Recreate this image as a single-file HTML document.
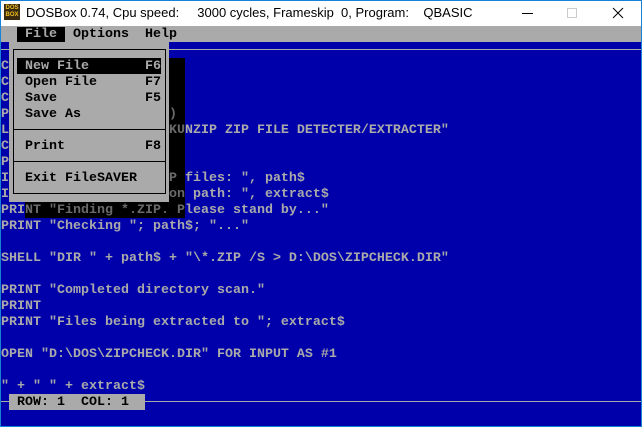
<!DOCTYPE html>
<html><head><meta charset="utf-8"><style>
*{margin:0;padding:0}
body{width:642px;height:427px;overflow:hidden;background:#fff;position:relative;font-family:"Liberation Mono",monospace}
.abs{position:absolute}
.t{position:absolute;font-family:"Liberation Mono",monospace;font-size:13.33px;font-weight:bold;line-height:16px;white-space:pre;color:#aaa;padding-top:1px}
.k{color:#000}
</style></head><body>
<div class="abs" style="left:0;top:0;width:642px;height:427px;border:1px solid #1a82d6;box-sizing:border-box"></div>
<div class="abs" style="left:4px;top:4px;width:16px;height:16px;background:#3a2a10;color:#f0c020;font:bold 6px/7px 'Liberation Sans',sans-serif;text-align:center;padding-top:1px;box-sizing:border-box">DOS<br>BOX</div>
<div class="abs" style="left:26px;top:5px;font:13px 'Liberation Sans',sans-serif;color:#000;white-space:pre">DOSBox 0.74, Cpu speed:     3000 cycles, Frameskip  0, Program:    QBASIC</div>
<div class="abs" style="left:522px;top:13px;width:11px;height:1px;background:#000"></div>
<div class="abs" style="left:567px;top:8px;width:10px;height:10px;border:1px solid #ccc;box-sizing:border-box"></div>
<svg class="abs" style="left:612px;top:7px" width="12" height="12"><path d="M1 1L11 11M11 1L1 11" stroke="#000" stroke-width="1"/></svg>
<div class="abs" style="left:1px;top:26px;width:640px;height:400px;background:#0000aa"></div>
<div class="abs" style="left:1px;top:26px;width:640px;height:16px;background:#aaa"></div>
<div class="abs" style="left:1px;top:49px;width:640px;height:1px;background:#aaa"></div>
<div class="t k" style="left:1px;top:26px">  <span style="background:#000;color:#aaa"> File </span> Options  Help</div>
<div class="t" style="left:1px;top:58px">C
C
C
P                    )
L                    KUNZIP ZIP FILE DETECTER/EXTRACTER"
C
P
I                    P files: ", path$
I                    on path: ", extract$
PRINT "Finding *.ZIP. Please stand by..."
PRINT "Checking "; path$; "..."

SHELL "DIR " + path$ + "\*.ZIP /S > D:\DOS\ZIPCHECK.DIR"

PRINT "Completed directory scan."
PRINT
PRINT "Files being extracted to "; extract$

OPEN "D:\DOS\ZIPCHECK.DIR" FOR INPUT AS #1

" + " " + extract$</div>
<div class="abs" style="left:1px;top:401px;width:640px;height:1px;background:#aaa"></div>
<div class="abs" style="left:9px;top:394px;width:136px;height:16px;background:#aaa"></div>
<div class="t k" style="left:9px;top:394px"> ROW: 1  COL: 1</div>
<div class="abs" style="left:169px;top:58px;width:16px;height:160px;background:#000"></div>
<div class="abs" style="left:25px;top:202px;width:160px;height:16px;background:#000"></div>
<div class="t" style="left:169px;top:58px;color:#6a6a6a">


)
KU


P 
on</div>
<div class="t" style="left:25px;top:202px;color:#6a6a6a">NT "Finding *.ZIP. P</div>
<div class="abs" style="left:9px;top:42px;width:160px;height:160px;background:#aaa"></div>
<div class="abs" style="left:13px;top:49px;width:153px;height:145px;border:1px solid #000;box-sizing:border-box"></div>
<div class="abs" style="left:13px;top:129px;width:153px;height:1px;background:#000"></div>
<div class="abs" style="left:13px;top:161px;width:153px;height:1px;background:#000"></div>
<div class="abs" style="left:17px;top:58px;width:144px;height:16px;background:#000"></div>
<div class="t" style="left:17px;top:58px"> New File       F6</div>
<div class="t k" style="left:17px;top:74px"> Open File      F7
 Save           F5
 Save As

 Print          F8

 Exit FileSAVER</div>
</body></html>
